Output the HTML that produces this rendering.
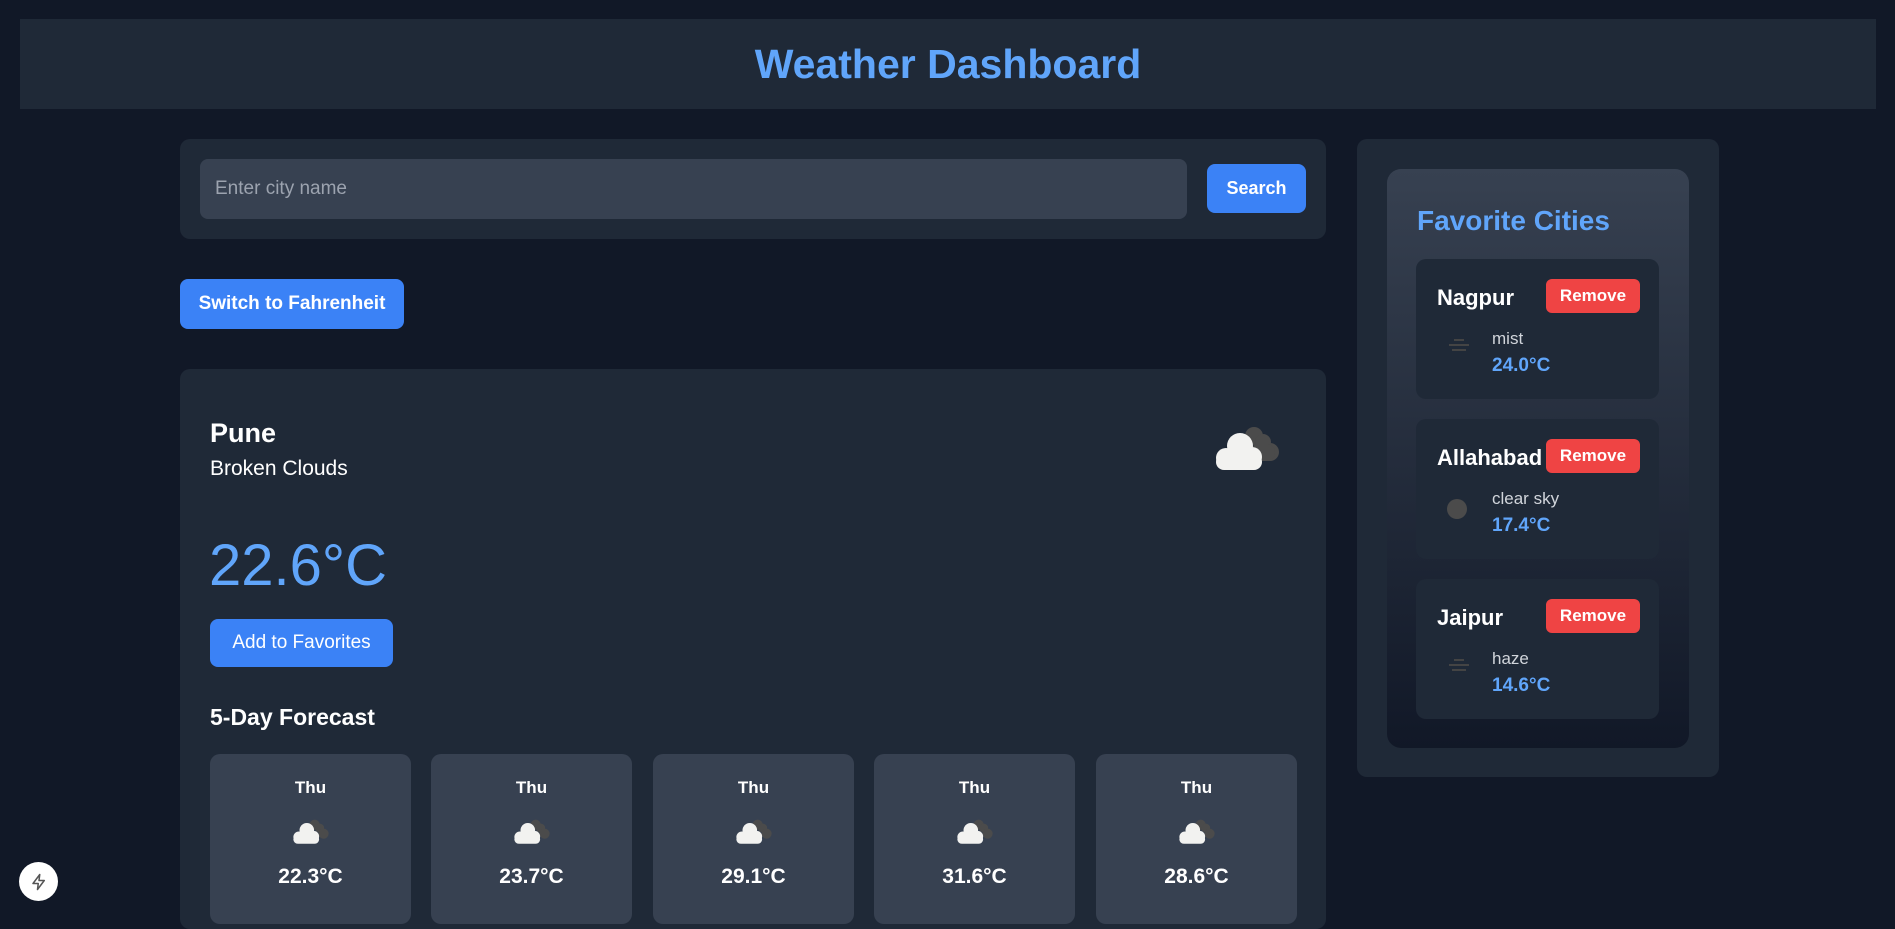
<!DOCTYPE html>
<html><head><meta charset="utf-8"><style>
*{box-sizing:border-box;margin:0;padding:0}
body{width:1895px;height:915px;overflow:hidden;background:#111827;font-family:"Liberation Sans",sans-serif;color:#fff;position:relative}
.abs{position:absolute}
.hdr{left:20px;top:19px;width:1856px;height:90px;background:#1f2937;display:flex;align-items:center;justify-content:center;color:#60a5fa;font-size:41px;font-weight:bold}
.box{background:#1f2937;border-radius:10px}
.btn{background:#3b82f6;color:#fff;border-radius:8px;display:flex;align-items:center;justify-content:center;font-weight:bold;font-size:18px}
.fc{position:absolute;top:754px;width:201px;height:170px;background:#374151;border-radius:10px;text-align:center}
.fc .d{position:absolute;top:24px;width:100%;font-size:17px;font-weight:bold}
.fc svg{position:absolute;left:80px;top:63px}
.fc .t{position:absolute;top:111px;width:100%;font-size:21px;font-weight:bold}
.cc{position:absolute;left:29px;width:243px;height:140px;background:#1f2937;border-radius:10px}
.cc .n{position:absolute;left:21px;top:26px;font-size:22px;font-weight:bold}
.cc .r{position:absolute;left:130px;top:20px;width:94px;height:34px;background:#ef4444;border-radius:6px;font-size:17px;font-weight:bold;display:flex;align-items:center;justify-content:center}
.cc .ds{position:absolute;left:76px;top:70px;font-size:17px;color:#d1d5db}
.cc .tp{position:absolute;left:76px;top:96px;font-size:19px;font-weight:bold;color:#60a5fa}
.cc .ic{position:absolute;left:31px;top:78px}
</style></head><body>
<div class="abs hdr">Weather Dashboard</div>

<div class="abs box" style="left:180px;top:139px;width:1146px;height:100px"></div>
<div class="abs" style="left:200px;top:159px;width:987px;height:60px;background:#374151;border-radius:8px;color:#9ca3af;font-size:19px;padding:19px 0 0 15px">Enter city name</div>
<div class="abs btn" style="left:1207px;top:164px;width:99px;height:49px">Search</div>

<div class="abs btn" style="left:180px;top:279px;width:224px;height:50px;font-size:19px">Switch to Fahrenheit</div>

<div class="abs box" style="left:180px;top:369px;width:1146px;height:560px"></div>
<div class="abs" style="left:210px;top:418px;font-size:27px;font-weight:bold">Pune</div>
<div class="abs" style="left:210px;top:457px;font-size:21px">Broken Clouds</div>
<svg class="abs" style="left:1210px;top:424px" width="75" height="50" viewBox="0 0 75 50">
<g fill="#4b4b4b"><circle cx="44" cy="12" r="9"/><circle cx="53" cy="18" r="8"/><circle cx="60" cy="28" r="9"/><rect x="40" y="20" width="25" height="17" rx="8"/></g>
<g fill="#f2f2f0"><circle cx="30" cy="22" r="13"/><circle cx="16" cy="34" r="10"/><circle cx="42" cy="33" r="10"/><rect x="6" y="30" width="46" height="16" rx="8"/></g></svg>
<div class="abs" style="left:209px;top:532px;font-size:58px;color:#60a5fa">22.6°C</div>
<div class="abs btn" style="left:210px;top:619px;width:183px;height:48px;font-weight:normal;font-size:19px">Add to Favorites</div>
<div class="abs" style="left:210px;top:704px;font-size:23px;font-weight:bold">5-Day Forecast</div>

<div class="fc" style="left:210px"><div class="d">Thu</div><svg width="42" height="30" viewBox="0 0 75 50"><g fill="#4b4b4b"><circle cx="44" cy="12" r="9"/><circle cx="53" cy="18" r="8"/><circle cx="60" cy="28" r="9"/></g><g fill="#f2f2f0"><circle cx="30" cy="22" r="13"/><circle cx="16" cy="34" r="10"/><circle cx="42" cy="33" r="10"/><rect x="6" y="30" width="46" height="16" rx="8"/></g></svg><div class="t">22.3°C</div></div>
<div class="fc" style="left:431px"><div class="d">Thu</div><svg width="42" height="30" viewBox="0 0 75 50"><g fill="#4b4b4b"><circle cx="44" cy="12" r="9"/><circle cx="53" cy="18" r="8"/><circle cx="60" cy="28" r="9"/></g><g fill="#f2f2f0"><circle cx="30" cy="22" r="13"/><circle cx="16" cy="34" r="10"/><circle cx="42" cy="33" r="10"/><rect x="6" y="30" width="46" height="16" rx="8"/></g></svg><div class="t">23.7°C</div></div>
<div class="fc" style="left:653px"><div class="d">Thu</div><svg width="42" height="30" viewBox="0 0 75 50"><g fill="#4b4b4b"><circle cx="44" cy="12" r="9"/><circle cx="53" cy="18" r="8"/><circle cx="60" cy="28" r="9"/></g><g fill="#f2f2f0"><circle cx="30" cy="22" r="13"/><circle cx="16" cy="34" r="10"/><circle cx="42" cy="33" r="10"/><rect x="6" y="30" width="46" height="16" rx="8"/></g></svg><div class="t">29.1°C</div></div>
<div class="fc" style="left:874px"><div class="d">Thu</div><svg width="42" height="30" viewBox="0 0 75 50"><g fill="#4b4b4b"><circle cx="44" cy="12" r="9"/><circle cx="53" cy="18" r="8"/><circle cx="60" cy="28" r="9"/></g><g fill="#f2f2f0"><circle cx="30" cy="22" r="13"/><circle cx="16" cy="34" r="10"/><circle cx="42" cy="33" r="10"/><rect x="6" y="30" width="46" height="16" rx="8"/></g></svg><div class="t">31.6°C</div></div>
<div class="fc" style="left:1096px"><div class="d">Thu</div><svg width="42" height="30" viewBox="0 0 75 50"><g fill="#4b4b4b"><circle cx="44" cy="12" r="9"/><circle cx="53" cy="18" r="8"/><circle cx="60" cy="28" r="9"/></g><g fill="#f2f2f0"><circle cx="30" cy="22" r="13"/><circle cx="16" cy="34" r="10"/><circle cx="42" cy="33" r="10"/><rect x="6" y="30" width="46" height="16" rx="8"/></g></svg><div class="t">28.6°C</div></div>

<div class="abs box" style="left:1357px;top:139px;width:362px;height:638px"></div>
<div class="abs" style="left:1387px;top:169px;width:302px;height:579px;border-radius:14px;background:linear-gradient(#374151,#111827)">
<div class="abs" style="left:30px;top:36px;font-size:28px;font-weight:bold;color:#60a5fa">Favorite Cities</div>
<div class="cc" style="top:90px"><div class="n">Nagpur</div><div class="r">Remove</div>
<svg class="ic" width="24" height="16"><g stroke="#444" stroke-width="2"><line x1="7" y1="3" x2="17" y2="3"/><line x1="2" y1="8" x2="22" y2="8"/><line x1="5" y1="13" x2="19" y2="13"/></g></svg>
<div class="ds">mist</div><div class="tp">24.0°C</div></div>
<div class="cc" style="top:250px"><div class="n">Allahabad</div><div class="r">Remove</div>
<svg class="ic" width="24" height="24" style="top:78px;left:31px"><circle cx="10" cy="12" r="10" fill="#4b4b4b"/></svg>
<div class="ds">clear sky</div><div class="tp">17.4°C</div></div>
<div class="cc" style="top:410px"><div class="n">Jaipur</div><div class="r">Remove</div>
<svg class="ic" width="24" height="16"><g stroke="#444" stroke-width="2"><line x1="7" y1="3" x2="17" y2="3"/><line x1="2" y1="8" x2="22" y2="8"/><line x1="5" y1="13" x2="19" y2="13"/></g></svg>
<div class="ds">haze</div><div class="tp">14.6°C</div></div>
</div>

<div class="abs" style="left:19px;top:862px;width:39px;height:39px;border-radius:50%;background:#fff;display:flex;align-items:center;justify-content:center">
<svg width="18" height="18" viewBox="0 0 24 24"><path d="M13 2L4 14h7l-1 8 9-12h-7z" fill="none" stroke="#555" stroke-width="2" stroke-linejoin="round"/></svg></div>
</body></html>
